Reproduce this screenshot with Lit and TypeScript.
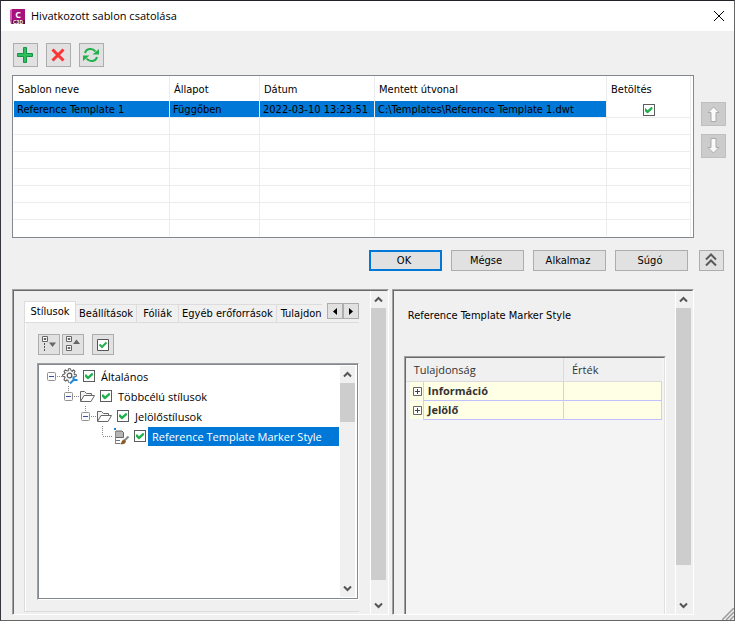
import { LitElement, html, css, svg, nothing } from "lit";
import { customElement, property, state } from "lit/decorators.js";
import { classMap } from "lit/directives/class-map.js";

const controls = css`
  *, *::before, *::after { box-sizing: border-box; }
  button {
    display: flex;
    align-items: center;
    justify-content: center;
    flex: none;
    margin: 0;
    padding: 0;
    border: 1px solid #adadad;
    border-radius: 0;
    background: #e1e1e1;
    color: #000;
    font: inherit;
  }
  svg { display: block; flex: none; }
  input[type="checkbox"] {
    appearance: none;
    flex: none;
    display: grid;
    place-items: center;
    width: 12px;
    height: 12px;
    margin: 0;
    border: 1px solid #5c5c5c;
    background: #fff;
  }
  input[type="checkbox"]:checked::before {
    content: "";
    width: 8px;
    height: 8px;
    background: #22b14c;
    clip-path: polygon(0 38%, 12% 25%, 38% 52%, 88% 8%, 100% 22%, 100% 38%, 42% 92%, 32% 92%, 0 58%);
  }
`;

/** Vertical scroll bar; size is the thumb's share of the track in percent. */
@customElement("scroll-bar")
export class ScrollBar extends LitElement {
  @property({ type: Number }) size = 50;

  static styles = [controls, css`
    :host { display: flex; flex-direction: column; flex: none; width: 15px; background: #f0f0f0; }
    button { width: 15px; height: 17px; border: 0; background: none; }
    .track { flex: 1; }
    .thumb { background: #cdcdcd; }
  `];

  private arrow(d: string, label: string) {
    return html`<button aria-label=${label}>
      <svg width="9" height="7" viewBox="0 0 9 7"><path d=${d} fill="none" stroke="#555" stroke-width="2"/></svg>
    </button>`;
  }

  render() {
    return html`
      ${this.arrow("M1 5.500L4.500 2L8 5.500", "Fel")}
      <div class="track"><div class="thumb" style="height:${this.size}%"></div></div>
      ${this.arrow("M1 1.500L4.500 5L8 1.500", "Le")}
    `;
  }
}

interface Node { label: string; level: number; icon: "gear" | "folder" | "marker"; leaf?: boolean; selected?: boolean; }

const nodes: Node[] = [
  { label: "Általános", level: 0, icon: "gear" },
  { label: "Többcélú stílusok", level: 1, icon: "folder" },
  { label: "Jelölőstílusok", level: 2, icon: "folder" },
  { label: "Reference Template Marker Style", level: 3, icon: "marker", leaf: true, selected: true },
];

const teeth = [0, 45, 90, 135, 180, 225, 270, 315];
const nodeIcons = {
  gear: svg`
    ${teeth.map(a => svg`<path d="M6 3L6.500 .7H8.500L9 3" transform="rotate(${a} 7.500 7.500)" fill="#fff" stroke="#555" stroke-width="1"/>`)}
    <circle cx="7.500" cy="7.500" r="4.900" fill="#fff" stroke="#555" stroke-width="1" stroke-dasharray="1.850 2" stroke-dashoffset="-1"/>
    <circle cx="7.500" cy="7.500" r="2.300" fill="#fff" stroke="#555" stroke-width="1.200"/>
    <path d="M8 15L13 10" stroke="#fff" stroke-width="4"/>
    <path d="M8 15.500L12.500 11M11.500 8.500V11L12.500 12H15.500" stroke="#1e88dc" stroke-width="2" fill="none"/>`,
  folder: svg`
    <path d="M1.500 13V3.500H5.500L7.500 5.500H12.500V7.500" fill="#f4f4f4" stroke="#666"/>
    <path d="M1.500 13.500L5 7.500H15.500L12 13.500Z" fill="#fff" stroke="#666"/>`,
  marker: svg`
    <path d="M2.500 3V16" stroke="#888"/>
    <path d="M3 3H9L10.500 4.500V9.500H3" fill="#b5b5b5" stroke="#666"/>
    <path d="M3 12.500H7M3 15.500H7" stroke="#777"/>
    <path d="M1 0H3V2H1Z" fill="#1e88dc"/>
    <path d="M15.500 8.500L11.500 12.500" stroke="#888" stroke-width="2"/>
    <path d="M11 11.500L13 13.500C12 16.500 9.500 16.500 7 16C9 15 8.500 12 11 11.500Z" fill="#8a5a2b"/>`,
};

@customElement("app-root")
export class AppRoot extends LitElement {
  @state() private tab = 0;

  private columns = ["Sablon neve", "Állapot", "Dátum", "Mentett útvonal", "Betöltés"];
  private tabs = ["Stílusok", "Beállítások", "Fóliák", "Egyéb erőforrások", "Tulajdon"];

  static styles = [controls, css`
    :host {
      display: flex;
      flex-direction: column;
      box-sizing: border-box;
      min-height: 100vh;
      border: 1px solid #666;
      border-top-color: #222328;
      border-left-color: #34353e;
      background: #f0f0f0;
      color: #000;
      font: 11px/16px "DejaVu Sans Condensed", "DejaVu Sans", sans-serif;
      position: relative;
    }
    .ui { font-family: "Open Sans", "Noto Sans", sans-serif; }

    header { display: flex; align-items: center; height: 30px; padding: 0 9px 0 8px; background: #fff; }
    header h1 { flex: 1; margin: 0 0 0 5px; font: 11px/16px "Open Sans", "Noto Sans", sans-serif; }
    header button { border: 0; background: none; width: 12px; height: 12px; }

    .toolbar { display: flex; gap: 8px; padding: 12px 12px 8px; }
    .toolbar button { width: 25px; height: 24px; }

    .list { display: flex; gap: 7px; padding: 0 8px 0 11px; }
    .grid { flex: 1; border: 1px solid #828790; background: #fff; padding-right: 2px; }
    .grid table { width: 100%; border-collapse: separate; border-spacing: 0; table-layout: fixed; }
    .grid th, .grid td { border-right: 1px solid #ececec; text-align: left; white-space: nowrap; overflow: hidden; }
    .grid th { height: 25px; padding: 2px 4px 0; font-weight: normal; }
    .grid td { height: 17px; padding: 2px 3px 0; line-height: 14px; border-bottom: 1px solid #ececec; }
    .grid th:first-child, .grid td:first-child { border-left: 1px solid #fff; }
    .grid tr:last-child td { border-bottom-color: #fff; }
    .grid .chosen td:not(:last-child) { background: #0078d7; background-clip: padding-box; }
    .grid td input { margin: 0 auto; }
    .c-name { width: 157px; } .c-state { width: 90px; } .c-date { width: 115px; } .c-load { width: 84px; }
    .order { display: flex; flex-direction: column; gap: 8px; padding-top: 27px; }
    .order button { width: 25px; height: 24px; background: #cccccc; border-color: #bfbfbf; }

    .actions { display: flex; justify-content: flex-end; gap: 9px; padding: 12px 10px 18px; }
    .actions button { width: 73px; height: 21px; padding: 1px 3px 0 0; }
    .actions .default { border: 2px solid #0078d7; }
    .actions .collapse { width: 25px; margin-left: 2px; padding: 0; }

    .panels { flex: 1; display: flex; gap: 3px; padding: 0 40px 5px 11px; }
    .panel { display: flex; min-width: 0; border: 1px solid; border-color: #a0a0a0 #fff #fff #a0a0a0; }
    .panel > .inner { flex: 1; display: flex; min-width: 0; border: 1px solid; border-color: #696969 transparent transparent #696969; border-bottom: 0; }
    .left { flex: 377 1 0; } .right { flex: 302 1 0; }
    .rail { display: flex; flex: none; border-left: 1px solid #fff; padding-right: 1px; }

    .tabbed { flex: 1; min-width: 0; display: flex; flex-direction: column; padding: 10px 11px 2px 10px; }
    .strip { display: flex; align-items: flex-end; height: 21px; }
    .tablist { display: flex; flex: 1; align-items: flex-end; min-width: 0; overflow: hidden; }
    .tablist button { height: 18px; min-width: 42px; padding: 0 3px; border: 1px solid #dcdcdc; border-left: 0; border-bottom: 0; background: #f0f0f0; }
    .tablist button.on { height: 21px; min-width: 52px; border-left: 1px solid #dcdcdc; background: #fff; }
    .tablist button:last-child { padding: 0 0 0 4px; border-right: 0; }
    .pager { display: flex; align-self: flex-start; padding-top: 2px; }
    .pager button { width: 16px; height: 16px; }
    .page { flex: 1; display: flex; flex-direction: column; border: 1px solid #dcdcdc; border-right: 0; box-shadow: inset 1px 0 #fff; padding: 11px 0 11px 12px; }
    .tools { display: flex; gap: 2px; padding: 0 1px 8px; }
    .tools button { width: 22px; height: 21px; }
    .tools .check { margin-left: 6px; }

    .tree { flex: 1; display: flex; border: 1px solid; border-color: #a0a0a0 #fff #fff #a0a0a0; }
    .tree-in { flex: 1; display: flex; border: 1px solid #828790; background: #fff; padding: 1px 2px 1px 0; min-width: 0; }
    ul { flex: 1; min-width: 0; margin: 0; padding: 0; list-style: none; }
    li { display: flex; align-items: center; height: 20px; padding-right: 1px; }
    .tree li input { margin: 0 2px 0 5px; }
    li label { white-space: nowrap; line-height: 19px; padding: 0 4px; }
    li.selected label { flex: 1; background: #0078d7; color: #fff; }
    .indent { flex: none; width: 8px; }
    .step { flex: none; width: 17px; }

    .detail { flex: 1; min-width: 0; display: flex; flex-direction: column; padding: 17px 9px 0 10px; }
    .detail h2 { margin: 0 0 32px 4px; font: inherit; }
    .props { flex: 1; border: 1px solid; border-color: #a0a0a0 #fff transparent #a0a0a0; border-bottom: 0; }
    .props-in { height: 100%; border: 1px solid; border-color: #696969 #e0e0e0 transparent #696969; border-bottom: 0; background: #f4f4f4; padding-right: 2px; }
    .props table { width: 100%; border-collapse: separate; border-spacing: 0; table-layout: fixed; color: #333; }
    .props th { height: 24px; padding: 0 8px; text-align: left; font-weight: normal; background: #f0f0f0; border-bottom: 1px solid #dcdcdc; }
    .props th:last-child { border-left: 1px solid #dcdcdc; }
    .props td { height: 19px; padding: 0 4px; background: #ffffe6; border-left: 1px solid #ffc0c0; border-bottom: 1px solid #c0c0ff; font-weight: bold; }
    .props td:last-child { border-right: 1px solid #ffc0c0; }
    .props td:first-child { padding: 0 0 0 3px; border: 0; border-left: 4px solid #f4f4f4; border-bottom: 1px solid #f4f4f4; }
    .props td button { width: 9px; height: 9px; border: 0; background: none; }
    .k-gutter { width: 17px; } .k-value { width: 99px; }

    .grip { position: absolute; right: 0; bottom: 0; }
  `];

  private renderNode(n: Node) {
    const id = `node-${n.level}`;
    return html`<li class=${classMap({ selected: !!n.selected })}>
      <span class="indent"></span>
      ${Array.from({ length: n.level }, () => html`<span class="step"></span>`)}
      <svg width="15" height="20" viewBox="0 0 15 20">
        ${n.level ? svg`<path d="M4.500 0V${n.leaf ? 10 : 5}" stroke="#888" stroke-dasharray="1 1"/>` : nothing}
        ${n.leaf
          ? svg`<path d="M5 10.500H15" stroke="#888" stroke-dasharray="1 1"/>`
          : svg`<path d="M10 10.500H15" stroke="#888" stroke-dasharray="1 1"/>
              <rect x=".5" y="6.500" width="8" height="8" rx="1" fill="#fafafa" stroke="#919191"/>
              <path d="M2 10.500H7" stroke="#3950a0"/>`}
      </svg>
      <svg width="16" height="17" viewBox="0 0 16 17">${nodeIcons[n.icon]}</svg>
      <input type="checkbox" id=${id} checked><label for=${id} class="ui">${n.label}</label>
    </li>`;
  }

  render() {
    return html`
      <header>
        <svg width="17" height="17" viewBox="0 0 17 17">
          <path d="M3 1H16V12H3Z" fill="#a5127c"/><path d="M1 2L3 1V12H1Z" fill="#d75db4"/>
          <path d="M1 12H3V16H2Z" fill="#c23d9b"/><path d="M3 12H16V16H3Z" fill="#5a0a48"/>
          <text x="9" y="10" text-anchor="middle" font-family="Open Sans" font-weight="bold" font-size="9" fill="#fff">C</text>
          <text x="9" y="16" text-anchor="middle" font-family="Liberation Sans" font-weight="bold" font-size="5" fill="#fff">C3D</text>
        </svg>
        <h1>Hivatkozott sablon csatolása</h1>
        <button aria-label="Bezárás"><svg width="10" height="10" viewBox="0 0 10 10"><path d="M0 0L10 10M10 0L0 10" stroke="#000"/></svg></button>
      </header>

      <div class="toolbar">
        <button aria-label="Hozzáadás"><svg width="17" height="16" viewBox="0 0 17 16"><path d="M6.500 .5H9.500V6.500H15.500V9.500H9.500V15.500H6.500V9.500H.5V6.500H6.500Z" fill="#2dbe60" stroke="#159443"/></svg></button>
        <button aria-label="Törlés"><svg width="15" height="14" viewBox="0 0 15 14"><path d="M1.500 1.500L12.500 12.500M12.500 1.500L1.500 12.500" stroke="#fb3535" stroke-width="3"/></svg></button>
        <button aria-label="Frissítés"><svg width="17" height="16" viewBox="0 0 17 16">
          <path d="M2 6C3 1.500 9.500 .5 12.500 4.500M14 10C13 14.500 6.500 15.500 3.500 11.500" fill="none" stroke="#22b14c" stroke-width="2"/>
          <path d="M16 2V7.500H9.500ZM0 14V8.500H6.500Z" fill="#22b14c"/></svg></button>
      </div>

      <div class="list">
        <div class="grid">
          <table>
            <colgroup><col class="c-name"><col class="c-state"><col class="c-date"><col><col class="c-load"></colgroup>
            <thead><tr>${this.columns.map(c => html`<th scope="col">${c}</th>`)}</tr></thead>
            <tbody>
              <tr class="chosen">
                <td>Reference Template 1</td><td>Függőben</td><td>2022-03-10 13:23:51</td>
                <td>C:\\Templates\\Reference Template 1.dwt</td>
                <td><input type="checkbox" aria-label="Betöltés" checked></td>
              </tr>
              ${Array.from({ length: 7 }, () => html`<tr>${this.columns.map(() => html`<td></td>`)}</tr>`)}
            </tbody>
          </table>
        </div>
        <div class="order">
          <button aria-label="Mozgatás fel" disabled><svg width="13" height="16" viewBox="0 0 13 16"><path d="M6.500 1L12 6.500H9V15.500H4V6.500H1Z" fill="#fafafa" stroke="#aaa"/></svg></button>
          <button aria-label="Mozgatás le" disabled><svg width="13" height="16" viewBox="0 0 13 16"><path d="M6.500 15L12 9.500H9V.5H4V9.500H1Z" fill="#fafafa" stroke="#aaa"/></svg></button>
        </div>
      </div>

      <div class="actions">
        <button class="default">OK</button><button>Mégse</button><button>Alkalmaz</button><button>Súgó</button>
        <button class="collapse" aria-label="Összecsukás"><svg width="13" height="15" viewBox="0 0 13 15"><path d="M1 6.500L6 1.500L11 6.500M1 12.500L6 7.500L11 12.500" fill="none" stroke="#5a5a5a" stroke-width="2"/></svg></button>
      </div>

      <div class="panels">
        <section class="panel left"><div class="inner">
          <div class="tabbed">
            <div class="strip">
              <div class="tablist" role="tablist">
                ${this.tabs.map((t, i) => html`<button role="tab" class=${classMap({ on: i === this.tab })}
                  aria-selected=${i === this.tab} @click=${() => { this.tab = i; }}>${t}</button>`)}
              </div>
              <div class="pager">
                <button aria-label="Előző"><svg width="4" height="7" viewBox="0 0 4 7"><path d="M4 0V7L0 3.500Z"/></svg></button>
                <button aria-label="Következő"><svg width="4" height="7" viewBox="0 0 4 7"><path d="M0 0V7L4 3.500Z"/></svg></button>
              </div>
            </div>
            <div class="page" role="tabpanel">
              <div class="tools">
                <button aria-label="Összes kibontása"><svg width="16" height="17" viewBox="0 0 16 17">
                  <path d="M1.500 .5H6.500V5.500H1.500ZM3 2.500H5V3.500H3Z" fill="#fff" stroke="#666"/><path d="M3.500 7V16" stroke="#555" stroke-dasharray="2 1"/><path d="M8 6.500H15L11.500 11Z" fill="#666"/></svg></button>
                <button aria-label="Összes bezárása"><svg width="16" height="17" viewBox="0 0 16 17">
                  <path d="M1.500 .5H6.500V5.500H1.500ZM1.500 9.500H6.500V14.500H1.500ZM3 2.500H5V3.500H3ZM3 11.500H5V12.500H3Z" fill="#fff" stroke="#666"/><path d="M8 8H15L11.500 3.500Z" fill="#666"/></svg></button>
                <button class="check" aria-label="Összes kijelölése"><svg width="12" height="12" viewBox="0 0 12 12"><path d="M.5 .5H11.500V11.500H.5Z" fill="#fff" stroke="#555"/><path d="M2.500 5.500L5 8L9.500 3.500" fill="none" stroke="#22b14c" stroke-width="2"/></svg></button>
              </div>
              <div class="tree"><div class="tree-in">
                <ul>${nodes.map(n => this.renderNode(n))}</ul>
                <scroll-bar size="20"></scroll-bar>
              </div></div>
            </div>
          </div>
          <div class="rail"><scroll-bar size="94"></scroll-bar></div>
        </div></section>

        <section class="panel right"><div class="inner">
          <div class="detail">
            <h2>Reference Template Marker Style</h2>
            <div class="props"><div class="props-in">
              <table class="ui">
                <colgroup><col class="k-gutter"><col><col class="k-value"></colgroup>
                <thead><tr><th scope="col" colspan="2">Tulajdonság</th><th scope="col">Érték</th></tr></thead>
                <tbody>${["Információ", "Jelölő"].map(k => html`<tr>
                  <td><button aria-label="${k} kibontása"><svg width="9" height="9" viewBox="0 0 9 9"><path d="M.5 .5H8.500V8.500H.5Z" fill="#fff" stroke="#666"/><path d="M2 4.500H7M4.500 2V7" stroke="#444"/></svg></button></td>
                  <td>${k}</td><td></td></tr>`)}</tbody>
              </table>
            </div></div>
          </div>
          <div class="rail"><scroll-bar size="89"></scroll-bar></div>
        </div></section>
      </div>

      <svg class="grip" width="12" height="12" viewBox="0 0 12 12"><path d="M0 12L12 0M4 12L12 4M8 12L12 8" stroke="#9a9a9a" stroke-width="1.500"/></svg>
    `;
  }
}
